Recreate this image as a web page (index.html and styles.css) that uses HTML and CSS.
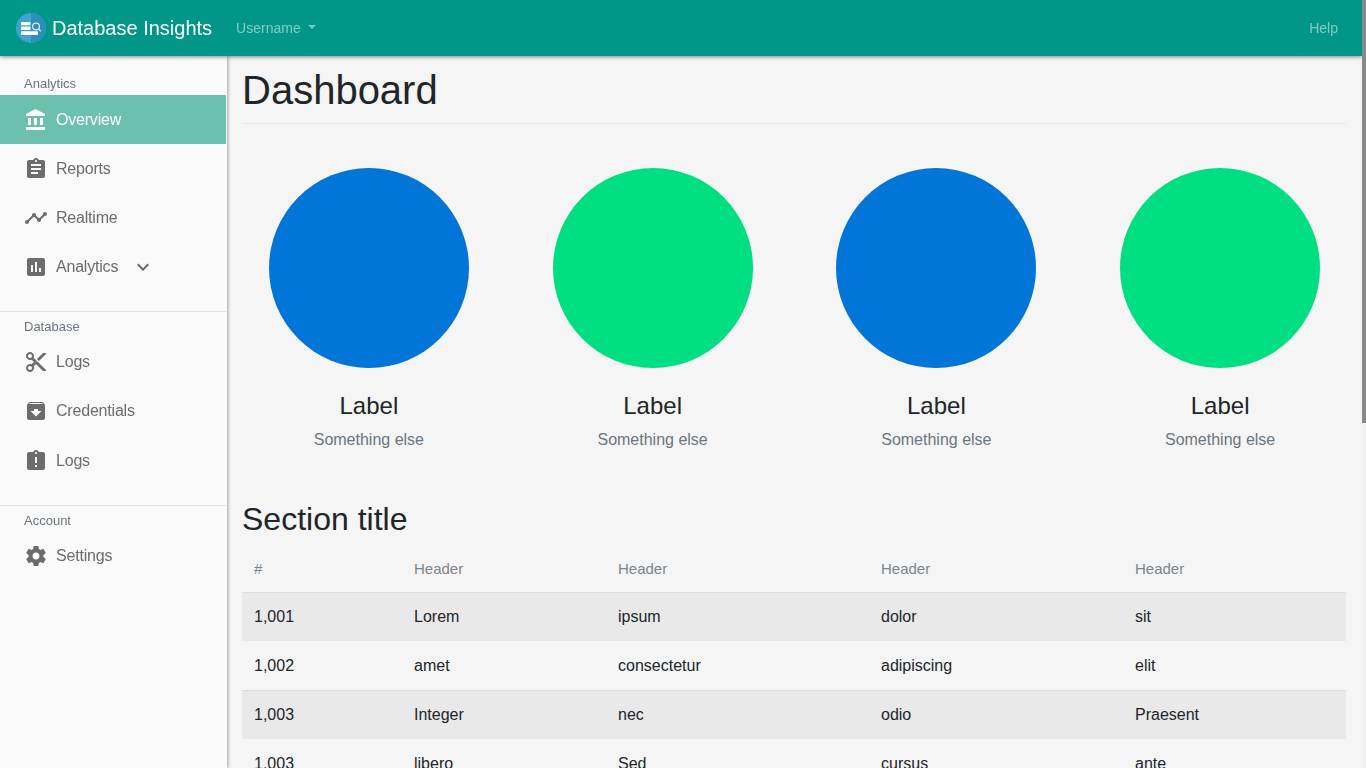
FILE: index.html
```html
<!DOCTYPE html>
<html lang="en">
<head>
<meta charset="utf-8">
<title>Database Insights</title>
<link rel="stylesheet" href="styles.css">
</head>
<body>
<header class="topbar">
  <a class="brand">
    <svg class="logo" viewBox="0 0 30 30" width="30" height="30">
      <circle cx="15" cy="15" r="15" fill="#3fa3cf"/>
      <path d="M15 0a15 15 0 0 1 0 30z" fill="#2f8fbb"/>
      <rect x="5" y="9" width="9.500" height="3.200" rx=".8" fill="#fff"/>
      <rect x="5" y="13.400" width="9.500" height="3.600" rx=".8" fill="#fff"/>
      <rect x="5" y="18.200" width="17" height="3.800" rx=".8" fill="#fff"/>
      <circle cx="20" cy="13.500" r="3.400" fill="none" stroke="#d5e9f2" stroke-width="1.300"/>
      <path d="M22.500 16l2.300 2.300" stroke="#d5e9f2" stroke-width="1.300"/>
    </svg>
    <span class="brand-text">Database Insights</span>
  </a>
  <a class="top-link user">Username<span class="caret"></span></a>
  <a class="top-link help">Help</a>
</header>
<div class="scrollbar"><div class="scroll-thumb"></div></div>
<div class="shell">
  <nav class="sidebar">
    <section class="group first">
      <h6 class="group-title">Analytics</h6>
      <a class="item active">
        <svg class="ico" viewBox="0 0 24 24"><path d="M4 10v7h3v-7H4zm6 0v7h3v-7h-3zM2 22h19v-3H2v3zm14-12v7h3v-7h-3zM11.500 1 2 6v2h19V6l-9.500-5z"/></svg>Overview</a>
      <a class="item">
        <svg class="ico" viewBox="0 0 24 24"><path d="M19 3h-4.180C14.400 1.840 13.300 1 12 1s-2.400.84-2.820 2H5c-1.100 0-2 .9-2 2v14c0 1.100.9 2 2 2h14c1.100 0 2-.9 2-2V5c0-1.100-.9-2-2-2zm-7 0c.55 0 1 .45 1 1s-.45 1-1 1-1-.45-1-1 .45-1 1-1zm2 14H7v-2h7v2zm3-4H7v-2h10v2zm0-4H7V7h10v2z"/></svg>Reports</a>
      <a class="item">
        <svg class="ico" viewBox="0 0 24 24"><path d="M23 8c0 1.100-.9 2-2 2-.18 0-.35-.02-.51-.07l-3.560 3.550c.05.16.07.34.07.52 0 1.100-.9 2-2 2s-2-.9-2-2c0-.18.02-.36.07-.52l-2.550-2.550c-.16.05-.34.07-.52.07s-.36-.02-.52-.07l-4.550 4.560c.05.16.07.33.07.51 0 1.100-.9 2-2 2s-2-.9-2-2 .9-2 2-2c.18 0 .35.02.51.07l4.560-4.550C8.020 9.360 8 9.180 8 9c0-1.100.9-2 2-2s2 .9 2 2c0 .18-.02.36-.07.52l2.550 2.550c.16-.05.34-.07.52-.07s.36.02.52.07l3.550-3.560C19.020 8.350 19 8.180 19 8c0-1.100.9-2 2-2s2 .9 2 2z"/></svg>Realtime</a>
      <a class="item">
        <svg class="ico" viewBox="0 0 24 24"><path d="M19 3H5c-1.100 0-2 .9-2 2v14c0 1.100.9 2 2 2h14c1.100 0 2-.9 2-2V5c0-1.100-.9-2-2-2zM9 17H7v-7h2v7zm4 0h-2V7h2v10zm4 0h-2v-4h2v4z"/></svg>Analytics<svg class="chev" viewBox="0 0 24 24"><path d="M7.410 8.590 12 13.170l4.590-4.580L18 10l-6 6-6-6z"/></svg></a>
    </section>
    <section class="group second">
      <h6 class="group-title">Database</h6>
      <a class="item">
        <svg class="ico" viewBox="0 0 24 24"><path d="M9.640 7.640c.23-.5.360-1.050.360-1.640 0-2.210-1.790-4-4-4S2 3.790 2 6s1.790 4 4 4c.59 0 1.140-.13 1.640-.36L10 12l-2.360 2.360C7.140 14.130 6.590 14 6 14c-2.210 0-4 1.790-4 4s1.790 4 4 4 4-1.790 4-4c0-.59-.13-1.140-.36-1.640L12 14l7 7h3v-1L9.640 7.640zM6 8c-1.100 0-2-.89-2-2s.9-2 2-2 2 .89 2 2-.9 2-2 2zm0 12c-1.100 0-2-.89-2-2s.9-2 2-2 2 .89 2 2-.9 2-2 2zm6-7.500c-.28 0-.5-.22-.5-.5s.22-.5.5-.5.5.22.5.5-.22.5-.5.5zM19 3l-6 6 2 2 7-7V3h-3z"/></svg>Logs</a>
      <a class="item">
        <svg class="ico" viewBox="0 0 24 24"><path d="M20.540 5.230 19.150 3.550C18.880 3.210 18.470 3 18 3H6c-.47 0-.88.21-1.160.55L3.460 5.230C3.170 5.570 3 6.020 3 6.500V19c0 1.100.9 2 2 2h14c1.100 0 2-.9 2-2V6.500c0-.48-.17-.93-.46-1.270zM12 17.500 6.500 12H10v-2h4v2h3.500L12 17.500zM5.120 5l.81-1h12l.94 1H5.120z"/></svg>Credentials</a>
      <a class="item last-log">
        <svg class="ico" viewBox="0 0 24 24"><path d="M19 3h-4.180C14.400 1.840 13.300 1 12 1s-2.400.84-2.820 2H5c-1.100 0-2 .9-2 2v14c0 1.100.9 2 2 2h14c1.100 0 2-.9 2-2V5c0-1.100-.9-2-2-2zm-6 15h-2v-2h2v2zm0-4h-2V8h2v6zm-1-9c-.55 0-1-.45-1-1s.45-1 1-1 1 .45 1 1-.45 1-1 1z"/></svg>Logs</a>
    </section>
    <section class="group third">
      <h6 class="group-title">Account</h6>
      <a class="item">
        <svg class="ico" viewBox="0 0 24 24"><path d="M19.430 12.980c.04-.32.07-.64.07-.98s-.03-.66-.07-.98l2.110-1.650c.19-.15.24-.42.12-.64l-2-3.460c-.12-.22-.39-.3-.61-.22l-2.490 1c-.52-.4-1.080-.73-1.690-.98l-.38-2.650C14.460 2.180 14.250 2 14 2h-4c-.25 0-.46.18-.49.42l-.38 2.650c-.61.25-1.170.59-1.690.98l-2.490-1c-.23-.09-.49 0-.61.22l-2 3.460c-.13.22-.07.49.12.64l2.110 1.650c-.04.32-.07.65-.07.98s.03.66.07.98l-2.110 1.650c-.19.15-.24.42-.12.64l2 3.460c.12.22.39.3.61.22l2.490-1c.52.4 1.080.73 1.690.98l.38 2.650c.03.24.24.42.49.42h4c.25 0 .46-.18.49-.42l.38-2.650c.61-.25 1.170-.59 1.690-.98l2.490 1c.23.09.49 0 .61-.22l2-3.460c.12-.22.07-.49-.12-.64l-2.110-1.650zM12 15.500c-1.930 0-3.500-1.570-3.500-3.500s1.570-3.500 3.500-3.500 3.500 1.570 3.500 3.500-1.570 3.500-3.500 3.500z"/></svg>Settings</a>
    </section>
  </nav>
  <main class="main">
    <h1 class="page-title">Dashboard</h1>
    <div class="stats">
      <div class="stat"><div class="disc blue"></div><h4 class="stat-label">Label</h4><span class="stat-sub">Something else</span></div>
      <div class="stat"><div class="disc green"></div><h4 class="stat-label">Label</h4><span class="stat-sub">Something else</span></div>
      <div class="stat"><div class="disc blue"></div><h4 class="stat-label">Label</h4><span class="stat-sub">Something else</span></div>
      <div class="stat"><div class="disc green"></div><h4 class="stat-label">Label</h4><span class="stat-sub">Something else</span></div>
    </div>
    <h2 class="section-title">Section title</h2>
    <table class="table">
      <colgroup><col class="c1"><col class="c2"><col class="c3"><col class="c4"><col class="c5"></colgroup>
      <thead><tr><th>#</th><th>Header</th><th>Header</th><th>Header</th><th>Header</th></tr></thead>
      <tbody>
        <tr><td>1,001</td><td>Lorem</td><td>ipsum</td><td>dolor</td><td>sit</td></tr>
        <tr><td>1,002</td><td>amet</td><td>consectetur</td><td>adipiscing</td><td>elit</td></tr>
        <tr><td>1,003</td><td>Integer</td><td>nec</td><td>odio</td><td>Praesent</td></tr>
        <tr><td>1,003</td><td>libero</td><td>Sed</td><td>cursus</td><td>ante</td></tr>
      </tbody>
    </table>
  </main>
</div>
</body>
</html>
```
FILE: styles.css
```css
* { box-sizing: border-box; }
html { height: 100%; overflow: hidden; }
body {
  margin: 0;
  height: 100%;
  overflow: hidden;
  font-family: "Liberation Sans", Arial, sans-serif;
  font-size: 16px;
  line-height: 1.5;
  color: #212529;
  background: #f5f5f5;
}
a { text-decoration: none; }
.scrollbar {
  position: fixed;
  top: 0; right: 0; bottom: 0;
  width: 4px;
  background: #f1f1f1;
  z-index: 4;
}
.scroll-thumb { height: 423px; background: #888; }
.topbar {
  position: fixed;
  top: 0; left: 0; right: 4px;
  height: 56px;
  z-index: 3;
  display: flex;
  align-items: center;
  background: #009688;
  box-shadow: 0 1px 4px rgba(0,0,0,.45);
  padding: 0 16px;
}
.brand { display: flex; align-items: center; color: #fff; margin-right: 16px; }
.logo { display: block; flex: none; margin-right: 6px; }
.brand-text { font-size: 20px; line-height: 30px; }
.top-link { color: rgba(255,255,255,.5); font-size: 14px; padding: 0 8px; }
.user { display: flex; align-items: center; }
.caret {
  width: 0; height: 0;
  margin-left: 7px;
  margin-bottom: 2px;
  border-top: 4px solid rgba(255,255,255,.5);
  border-left: 4px solid transparent;
  border-right: 4px solid transparent;
}
.help { margin-left: auto; padding-right: 8px; }
.shell { display: flex; align-items: stretch; padding-top: 56px; }
.sidebar {
  position: fixed;
  top: 56px; bottom: 0; left: 0;
  width: 227px;
  padding-right: 1px;
  background: #fafafa;
  box-shadow: 1px 0 3px rgba(0,0,0,.35);
  z-index: 2;
}
.group { border-bottom: 1px solid #e2e2e2; }
.third { border-bottom: 0; }
.first { height: 256px; padding-top: 19px; }
.second { height: 194px; padding-top: 6px; }
.third { padding-top: 6px; }
.group-title {
  margin: 0 0 1px;
  padding-left: 24px;
  font-size: 13px;
  line-height: 18px;
  font-weight: 400;
  color: #6c757d;
}
.first .group-title { margin-bottom: 2px; }
.item {
  display: flex;
  align-items: center;
  height: 49px;
  padding-left: 24px;
  font-size: 16px;
  color: #6c6c6c;
  letter-spacing: -.2px;
}
.last-log { margin-top: 1px; }
.ico { width: 24px; height: 24px; margin-right: 8px; fill: #6c6c6c; flex: none; }
.chev { width: 24px; height: 24px; margin-left: 13px; fill: #6c6c6c; flex: none; }
.active { background: #6cc0ae; color: #fff; }
.active .ico { fill: #fff; }
.main {
  margin-left: 228px;
  width: 1134px;
  padding: 10px 16px 24px 14px;
}
.page-title {
  margin: 0;
  font-size: 40px;
  line-height: 48px;
  font-weight: 400;
  padding: 0 0 9px;
  border-bottom: 1px solid #e9e9e9;
  color: #212529;
}
.stats {
  display: grid;
  grid-template-columns: repeat(4, 1fr);
  margin: 0 -16px 0 -15px;
  padding-top: 44px;
}
.stat { display: flex; flex-direction: column; align-items: center; }
.disc { width: 200px; height: 200px; border-radius: 50%; }
.blue { background: #0275d8; }
.green { background: #00de82; }
.stat-label { margin: 22px 0 0; font-size: 24px; line-height: 32px; font-weight: 400; }
.stat-sub { margin-top: 6px; color: #6c757d; font-size: 16px; line-height: 24px; }
.section-title {
  margin: 48px 0 0;
  font-size: 32px;
  line-height: 38px;
  font-weight: 400;
}
.table { width: 1104px; margin-top: 7px; border-collapse: collapse; table-layout: fixed; font-size: 16px; }
.c1 { width: 160px; } .c2 { width: 204px; } .c3 { width: 263px; } .c4 { width: 254px; } .c5 { width: 223px; }
.table th { height: 47px; padding: 2px 12px 0; font-weight: 400; text-align: left; color: #7c858c; font-size: 15px; }
.table td { height: 49px; padding: 0 12px; }
.table tbody tr:nth-child(odd) { background: #e9e9e9; }
.table tbody tr:nth-child(odd) td { box-shadow: inset 0 1px #dedede; }
```
